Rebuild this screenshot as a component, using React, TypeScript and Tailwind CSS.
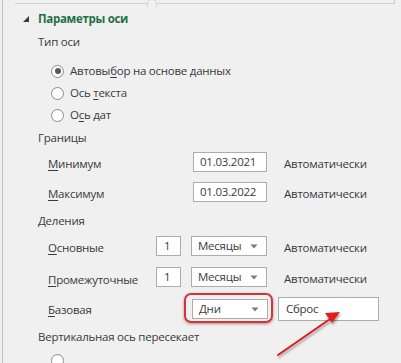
import React from "react";

const U = ({ children }: { children: React.ReactNode }) => (
  <span className="underline underline-offset-2 decoration-1">{children}</span>
);

function Radio({ checked, children }: { checked?: boolean; children?: React.ReactNode }) {
  return (
    <div className="flex items-center h-[22px] pl-[48px] gap-[6px]">
      <span className="w-[13px] h-[13px] rounded-full border border-[#8a8a8a] bg-white flex items-center justify-center">
        {checked && <span className="w-[6px] h-[6px] rounded-full bg-[#5a5a5a]" />}
      </span>
      <span>{children}</span>
    </div>
  );
}

function Caret() {
  return (
    <svg width="8" height="5" viewBox="0 0 8 5" className="shrink-0">
      <path d="M0.5 0.5 L7.5 0.5 L4 4.5 Z" fill="#7a7a7a" />
    </svg>
  );
}

function Select({ value }: { value: string }) {
  return (
    <div className="w-[76px] h-[20px] border border-[#acacac] bg-white flex items-center justify-between pl-[6px] pr-[8px]">
      <span>{value}</span>
      <Caret />
    </div>
  );
}

function NumBox() {
  return (
    <div className="w-[25px] h-[20px] border border-[#acacac] bg-white flex items-center pl-[7px]">1</div>
  );
}

export default function App() {
  return (
    <div className="relative w-[401px] h-[363px] overflow-hidden bg-[#f0f0f0] text-[11.5px] tracking-[-0.25px] leading-none text-[#3a3a3a] font-['Segoe_UI','Open_Sans','Noto_Sans',sans-serif]">
      <div className="ml-[2px] h-full border-l border-[#c4c4c4] flex flex-col [&>*]:shrink-0">
        {/* top line with notch */}
        <div className="relative mt-[3px] ml-[12px] mr-[6px] h-px bg-[#cfcfcf]">
          <div className="absolute left-[132px] -top-[4px] w-[10px] h-[8px] rounded-t-full border border-b-0 border-[#d6d6d6] bg-[#f0f0f0]" />
          <div className="absolute right-0 -top-[3px] w-px h-[4px] bg-[#cfcfcf]" />
        </div>

        {/* title */}
        <div className="mt-[4px] h-[22px] flex items-center pl-[20px] gap-[9px]">
          <svg width="6" height="6" viewBox="0 0 6 6">
            <path d="M6 0 L6 6 L0 6 Z" fill="#3a3a3a" />
          </svg>
          <span className="font-bold text-[#1e7145] text-[11.5px] tracking-[-0.3px]">Параметры оси</span>
        </div>

        <div className="mt-px h-[22px] flex items-center pl-[35px]">Тип оси</div>

        <div className="mt-[7px]">
          <Radio checked>
            Автовы<U>б</U>ор на основе данных
          </Radio>
          <Radio>
            Ось <U>т</U>екста
          </Radio>
          <Radio>
            О<U>с</U>ь дат
          </Radio>
        </div>

        <div className="mt-px h-[22px] flex items-center pl-[35px]">Границы</div>

        <div className="mt-[2px] h-[22px] flex items-center pl-[45px]">
          <span className="w-[145px] pt-[3px]">
            <U>М</U>инимум
          </span>
          <div className="w-[74px] h-[20px] border border-[#acacac] bg-white flex items-center pl-[6px]">01.03.2021</div>
          <span className="ml-[17px] pt-[3px]">Автоматически</span>
        </div>

        <div className="mt-[8px] h-[22px] flex items-center pl-[45px]">
          <span className="w-[145px] pt-[3px]">
            <U>М</U>аксимум
          </span>
          <div className="w-[74px] h-[20px] border border-[#acacac] bg-white flex items-center pl-[6px]">01.03.2022</div>
          <span className="ml-[17px] pt-[3px]">Автоматически</span>
        </div>

        <div className="mt-[7px] h-[22px] flex items-center pl-[35px]">Деления</div>

        <div className="mt-[3px] h-[22px] flex items-center pl-[45px]">
          <span className="w-[108px] pt-[3px]">
            <U>О</U>сновные
          </span>
          <NumBox />
          <div className="ml-[10px]">
            <Select value="Месяцы" />
          </div>
          <span className="ml-[17px] pt-[3px]">Автоматически</span>
        </div>

        <div className="mt-[9px] h-[22px] flex items-center pl-[45px]">
          <span className="w-[108px] pt-[5px]">
            <U>П</U>ромежуточные
          </span>
          <NumBox />
          <div className="ml-[10px]">
            <Select value="Месяцы" />
          </div>
          <span className="ml-[17px] pt-[4px]">Автоматически</span>
        </div>

        <div className="mt-[10px] h-[22px] flex items-center pl-[45px]">
          <span className="w-[144px] pt-[2px]">
            <U>Б</U>азовая
          </span>
          <div className="relative">
            <Select value="Дни" />
            <div className="absolute -left-[8px] -right-[5px] -top-[6px] -bottom-[4px] rounded-[7px] border-2 border-[#d2343c] shadow-[0_1px_3px_rgba(120,0,0,0.45)]" />
          </div>
          <div className="ml-[10px] w-[101px] h-[24px] border border-[#acacac] bg-white flex items-center pl-[7px]">Сброс</div>
        </div>

        <div className="mt-[6px] h-[22px] flex items-center pl-[35px]">Вертикальная ось пересекает</div>

        <div className="mt-px">
          <Radio />
        </div>
      </div>

      {/* watermark */}
      <div className="absolute left-[302px] top-[342px] text-[10.5px] tracking-[-0.2px] leading-none text-[#f9f9f9] [text-shadow:0_0_1px_rgba(0,0,0,0.08)] font-['Open_Sans',sans-serif]">
        www.excelworld.ru
      </div>

      {/* arrow */}
      <svg className="absolute left-0 top-0" width="401" height="363" viewBox="0 0 401 363">
        <defs>
          <filter id="sh" x="-20%" y="-20%" width="140%" height="140%">
            <feDropShadow dx="1" dy="2" stdDeviation="1.2" floodColor="#000" floodOpacity="0.35" />
          </filter>
        </defs>
        <g filter="url(#sh)">
          <line x1="278" y1="355" x2="330" y2="319" stroke="#dc1f1f" strokeWidth="2" strokeLinecap="round" />
          <path d="M340 312 L325 313 L332 323 Z" fill="#e01e1e" />
        </g>
      </svg>
    </div>
  );
}
